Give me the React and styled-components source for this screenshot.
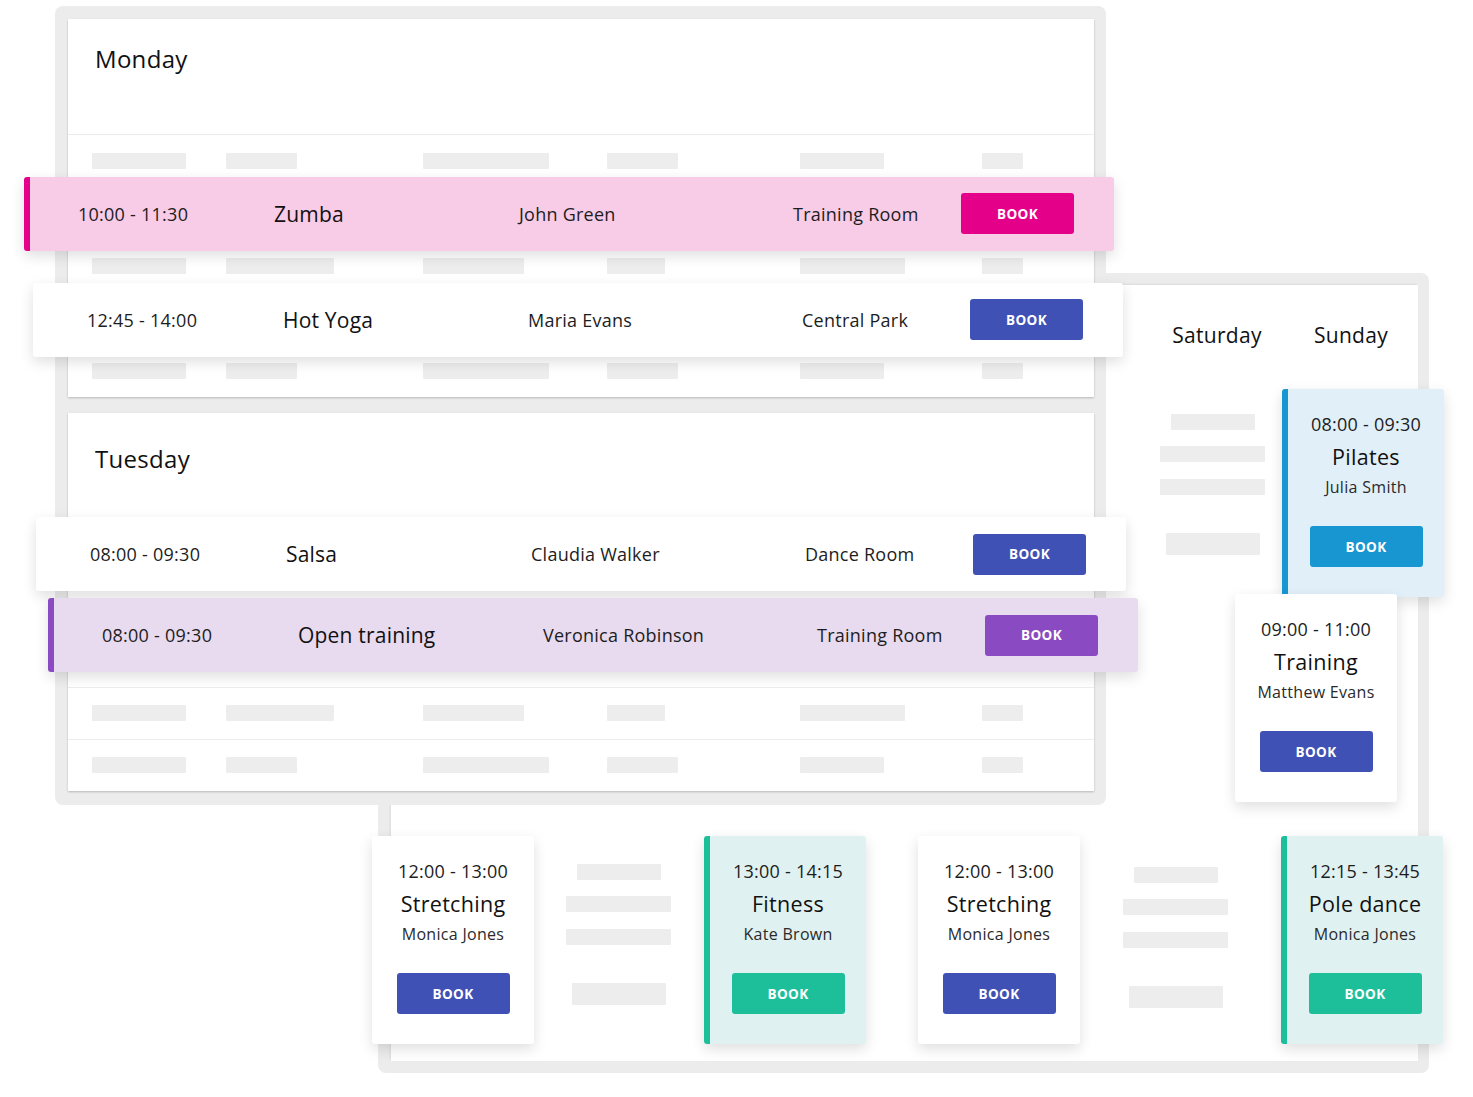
import React from 'react'
import styled, { createGlobalStyle } from 'styled-components'

const GlobalStyle = createGlobalStyle`
  html, body { margin: 0; padding: 0; background: #fff; }
  body { font-family: "Open Sans", "Noto Sans", sans-serif; color: #1d1d1d; }
  * { box-sizing: border-box; }
`

const c = {
  blue: '#4051b5',
  pink: '#e5008a',
  purple: '#8a4bc2',
  teal: '#1dbf9b',
  sky: '#1796d2',
  frame: '#ececec',
  bar: '#ededed',
}

const barsA = [94, 71, 126, 71, 84, 41]
const barsB = [94, 108, 101, 58, 105, 41]

const days = [
  {
    title: 'Monday',
    headHeight: 115,
    headTop: 24,
    rows: [
      { bars: barsA },
      {
        bars: barsB,
        booking: { time: '10:00 - 11:30', name: 'Zumba', coach: 'John Green', room: 'Training Room', accent: c.pink, tint: '#f8cbe7', top: -11, left: -44 },
      },
      { bars: barsB },
      {
        bars: barsA,
        booking: { time: '12:45 - 14:00', name: 'Hot Yoga', coach: 'Maria Evans', room: 'Central Park', accent: c.blue, top: -10, left: -35 },
      },
      { bars: barsA },
    ],
  },
  {
    title: 'Tuesday',
    headHeight: 117,
    headTop: 30,
    rows: [
      {
        bars: barsA,
        booking: { time: '08:00 - 09:30', name: 'Salsa', coach: 'Claudia Walker', room: 'Dance Room', accent: c.blue, top: -14, left: -32 },
      },
      {
        bars: barsB,
        booking: { time: '08:00 - 09:30', name: 'Open training', coach: 'Veronica Robinson', room: 'Training Room', accent: c.purple, tint: '#e8daef', top: 15, left: -20 },
      },
      { bars: barsA },
      { bars: barsB },
      { bars: barsA },
    ],
  },
]

const DayPanel = ({ day }) => (
  <Panel>
    <PanelHead $height={day.headHeight} $top={day.headTop}>{day.title}</PanelHead>
    {day.rows.map((row, i) => (
      <Row key={i}>
        {row.bars.map((w, j) => (
          <Cell key={j}>
            <Bar style={{ width: w }} />
          </Cell>
        ))}
        {row.booking && (
          <RowCard $tint={row.booking.tint} $accent={row.booking.tint ? row.booking.accent : null} $top={row.booking.top} $left={row.booking.left}>
            <Time>{row.booking.time}</Time>
            <ClassName>{row.booking.name}</ClassName>
            <Meta>{row.booking.coach}</Meta>
            <Meta>{row.booking.room}</Meta>
            <BookButton $color={row.booking.accent}>BOOK</BookButton>
          </RowCard>
        )}
      </Row>
    ))}
  </Panel>
)

const SlotCard = ({ time, name, coach, accent, tint }) => (
  <VCard $tint={tint} $accent={tint ? accent : null}>
    <VTime>{time}</VTime>
    <VTitle>{name}</VTitle>
    <VCoach>{coach}</VCoach>
    <BookButton $color={accent}>BOOK</BookButton>
  </VCard>
)

const Skeleton = ({ top, ml, mr }) => (
  <SkelStack $top={top} $ml={ml} $mr={mr}>
    <Bar style={{ width: 84 }} />
    <Bar style={{ width: 105, marginTop: 16 }} />
    <Bar style={{ width: 105, marginTop: 17 }} />
    <Bar style={{ width: 94, height: 22, marginTop: 38 }} />
  </SkelStack>
)

const App = () => {
  return (
    <>
      <GlobalStyle />
      <Canvas>
        <BackWindow>
          <BackInner>
            <WeekHead>
              <DayLabel>Saturday</DayLabel>
              <DayLabel>Sunday</DayLabel>
            </WeekHead>
            <MidRow>
              <Skeleton top={25} mr={17} />
              <CardSlot $mr={-26}>
                <SlotCard time="08:00 - 09:30" name="Pilates" coach="Julia Smith" accent={c.sky} tint="#e1eff8" />
              </CardSlot>
            </MidRow>
            <BottomRow>
              <SlotCard time="12:00 - 13:00" name="Stretching" coach="Monica Jones" accent={c.blue} />
              <Skeleton top={28} ml={32} />
              <CardSlot $ml={33}>
                <SlotCard time="13:00 - 14:15" name="Fitness" coach="Kate Brown" accent={c.teal} tint="#e0f1f1" />
              </CardSlot>
              <CardSlot $ml={52}>
                <SlotCard time="12:00 - 13:00" name="Stretching" coach="Monica Jones" accent={c.blue} />
              </CardSlot>
              <Skeleton top={31} ml={43} />
              <CardSlot $ml={53}>
                <SlotCard time="12:15 - 13:45" name="Pole dance" coach="Monica Jones" accent={c.teal} tint="#e0f1f1" />
              </CardSlot>
            </BottomRow>
          </BackInner>
          <FloatingSlot>
            <SlotCard time="09:00 - 11:00" name="Training" coach="Matthew Evans" accent={c.blue} />
          </FloatingSlot>
        </BackWindow>

        <FrontWindow>
          {days.map((d) => (
            <DayPanel key={d.title} day={d} />
          ))}
        </FrontWindow>
      </Canvas>
    </>
  )
}

export default App

const Canvas = styled.div`
  position: relative;
  width: 1473px;
  height: 1097px;
  overflow: hidden;
  background: #fff;
`

const FrontWindow = styled.div`
  position: absolute;
  left: 55px;
  top: 6px;
  width: 1051px;
  height: 799px;
  z-index: 2;
  background: ${c.frame};
  border-radius: 8px;
  padding: 13px 12px 13px 13px;
  display: flex;
  flex-direction: column;
  gap: 16px;
`

const Panel = styled.div`
  position: relative;
  height: 378px;
  background: #fff;
  display: flex;
  flex-direction: column;
  box-shadow: 0 1px 2px rgba(0, 0, 0, 0.22);
`

const PanelHead = styled.div`
  height: ${(p) => p.$height}px;
  padding: ${(p) => p.$top}px 0 0 27px;
  font-size: 24px;
  font-weight: 500;
  line-height: 32px;
  letter-spacing: 0.3px;
  color: #111;
`

const Row = styled.div`
  position: relative;
  flex: 1;
  border-top: 1px solid #ececec;
  display: grid;
  grid-template-columns: 134px 197px 184px 193px 182px 1fr;
  align-items: center;
  padding-left: 24px;
`

const Cell = styled.div`
  display: flex;
`

const Bar = styled.div`
  flex-shrink: 0;
  height: 16px;
  background: ${c.bar};
  border-radius: 1px;
`

const RowCard = styled.div`
  position: absolute;
  z-index: 2;
  top: ${(p) => p.$top}px;
  left: ${(p) => p.$left}px;
  width: 1090px;
  height: 74px;
  background: ${(p) => p.$tint || '#fff'};
  border-left: 6px solid ${(p) => p.$accent || p.$tint || '#fff'};
  border-radius: 3px;
  box-shadow: 0 5px 14px rgba(0, 0, 0, 0.13);
  display: grid;
  grid-template-columns: 196px 245px 274px 168px 113px;
  align-items: center;
  padding-left: 48px;
`

const Time = styled.div`
  font-size: 18px;
  letter-spacing: 0.25px;
  color: #1d1d1d;
`

const ClassName = styled.div`
  font-size: 21px;
  font-weight: 500;
  letter-spacing: 0.2px;
  color: #111;
`

const Meta = styled.div`
  font-size: 18px;
  letter-spacing: 0.25px;
  color: #1d1d1d;
`

const BookButton = styled.div`
  flex-shrink: 0;
  width: 113px;
  height: 41px;
  border-radius: 3px;
  background: ${(p) => p.$color};
  color: #fff;
  font-size: 13.5px;
  font-weight: 700;
  letter-spacing: 0.4px;
  display: flex;
  align-items: center;
  justify-content: center;
`

const BackWindow = styled.div`
  position: absolute;
  left: 378px;
  top: 273px;
  width: 1051px;
  height: 800px;
  z-index: 1;
  background: ${c.frame};
  border-radius: 8px;
  padding: 12px 11px 12px 13px;
`

const BackInner = styled.div`
  height: 100%;
  background: #fff;
  box-shadow: -1px -1px 2px rgba(0, 0, 0, 0.08);
  display: flex;
  flex-direction: column;
  padding-bottom: 17px;
`

const WeekHead = styled.div`
  height: 104px;
  flex-shrink: 0;
  display: flex;
  justify-content: flex-end;
  padding-top: 36px;
`

const DayLabel = styled.div`
  width: 134px;
  text-align: center;
  font-size: 21px;
  line-height: 28px;
  letter-spacing: 0.3px;
  color: #111;
`

const MidRow = styled.div`
  display: flex;
  justify-content: flex-end;
  align-items: flex-start;
`

const BottomRow = styled.div`
  margin-top: auto;
  margin-left: -19px;
  display: flex;
  align-items: flex-start;
`

const CardSlot = styled.div`
  flex-shrink: 0;
  margin-left: ${(p) => p.$ml || 0}px;
  margin-right: ${(p) => p.$mr || 0}px;
  position: relative;
  z-index: 2;
`

const FloatingSlot = styled.div`
  position: absolute;
  left: 857px;
  top: 321px;
  z-index: 3;
`

const SkelStack = styled.div`
  flex-shrink: 0;
  width: 105px;
  display: flex;
  flex-direction: column;
  align-items: center;
  padding-top: ${(p) => p.$top}px;
  margin-left: ${(p) => p.$ml || 0}px;
  margin-right: ${(p) => p.$mr || 0}px;
`

const VCard = styled.div`
  flex-shrink: 0;
  width: 162px;
  height: 208px;
  background: ${(p) => p.$tint || '#fff'};
  border-left: ${(p) => (p.$accent ? `6px solid ${p.$accent}` : 'none')};
  border-radius: 3px;
  box-shadow: 0 5px 14px rgba(0, 0, 0, 0.13);
  display: flex;
  flex-direction: column;
  align-items: center;
  padding-top: 23px;
`

const VTime = styled.div`
  font-size: 18px;
  line-height: 25px;
  letter-spacing: 0.25px;
  color: #1d1d1d;
`

const VTitle = styled.div`
  font-size: 21.5px;
  font-weight: 500;
  line-height: 28px;
  letter-spacing: 0.3px;
  margin-top: 6px;
  color: #111;
`

const VCoach = styled.div`
  font-size: 16px;
  line-height: 22px;
  letter-spacing: 0.3px;
  margin-top: 5px;
  margin-bottom: 28px;
  color: #2a2a2a;
`
